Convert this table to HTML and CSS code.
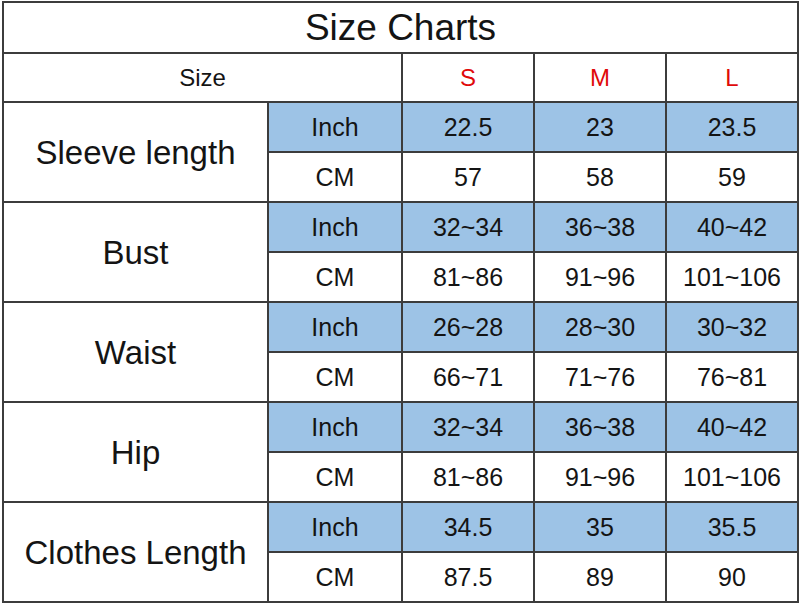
FILE: index.html
```html
<!DOCTYPE html>
<html>
<head>
<meta charset="utf-8">
<link rel="stylesheet" href="styles.css">
</head>
<body>
<table class="chart">
  <colgroup>
    <col class="c-label"><col class="c-unit"><col class="c-size"><col class="c-size"><col class="c-size">
  </colgroup>
  <tr class="r-title"><td colspan="5" class="title">Size Charts</td></tr>
  <tr class="r-head"><td colspan="2" class="head">Size</td><td class="sz">S</td><td class="sz">M</td><td class="sz">L</td></tr>

  <tr class="r-inch"><td rowspan="2" class="label">Sleeve length</td><td>Inch</td><td>22.5</td><td>23</td><td>23.5</td></tr>
  <tr class="r-cm"><td>CM</td><td>57</td><td>58</td><td>59</td></tr>

  <tr class="r-inch"><td rowspan="2" class="label">Bust</td><td>Inch</td><td>32~34</td><td>36~38</td><td>40~42</td></tr>
  <tr class="r-cm"><td>CM</td><td>81~86</td><td>91~96</td><td>101~106</td></tr>

  <tr class="r-inch"><td rowspan="2" class="label">Waist</td><td>Inch</td><td>26~28</td><td>28~30</td><td>30~32</td></tr>
  <tr class="r-cm"><td>CM</td><td>66~71</td><td>71~76</td><td>76~81</td></tr>

  <tr class="r-inch"><td rowspan="2" class="label">Hip</td><td>Inch</td><td>32~34</td><td>36~38</td><td>40~42</td></tr>
  <tr class="r-cm"><td>CM</td><td>81~86</td><td>91~96</td><td>101~106</td></tr>

  <tr class="r-inch"><td rowspan="2" class="label">Clothes Length</td><td>Inch</td><td>34.5</td><td>35</td><td>35.5</td></tr>
  <tr class="r-cm"><td>CM</td><td>87.5</td><td>89</td><td>90</td></tr>
</table>
</body>
</html>
```
FILE: styles.css
```css
html, body {
  margin: 0;
  padding: 0;
  background: #ffffff;
}
body {
  padding: 1px 0 0 2px;
  font-family: "Liberation Sans", Arial, sans-serif;
  color: #141414;
}
.chart {
  border-collapse: collapse;
  table-layout: fixed;
  width: 796px;
}
.c-label { width: 265px; }
.c-unit { width: 134px; }
.c-size { width: 132px; }
.chart td {
  border: 2px solid #3c3c3c;
  text-align: center;
  vertical-align: middle;
  padding: 0;
  font-size: 25px;
  line-height: 1;
}
.r-title td { height: 49px; }
.r-head td { height: 47px; }
.r-inch td, .r-cm td { height: 48px; }
.title {
  font-size: 37px !important;
}
.head { font-size: 24px !important; }
.sz {
  color: #e00a0a;
  font-size: 24px !important;
}
.r-inch td { background: #9dc3e6; }
.r-inch td.label { background: #ffffff; }
.label {
  font-size: 33px !important;
}
```
